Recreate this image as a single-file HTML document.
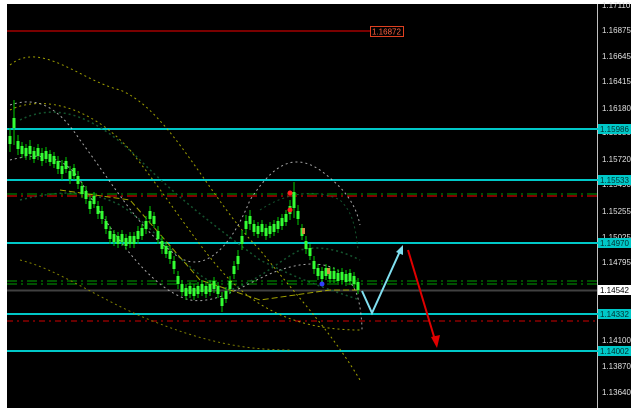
<!DOCTYPE html>
<html><head><meta charset="utf-8"><style>
html,body{margin:0;padding:0;background:#fff;width:643px;height:420px;overflow:hidden}
svg{position:absolute;left:0;top:0}
text{font-family:"Liberation Sans",sans-serif;font-size:8px}
</style></head><body>
<svg width="643" height="420" xmlns="http://www.w3.org/2000/svg">
<rect x="7" y="4" width="624" height="404" fill="#000"/>
<line x1="597.5" y1="4" x2="597.5" y2="408" fill="none" stroke="#c0c0c0" stroke-width="1"/>
<g fill="#e0e0e0">
<text x="602" y="8">1.17110</text>
<text x="602" y="33">1.16875</text>
<text x="602" y="59">1.16645</text>
<text x="602" y="84">1.16415</text>
<text x="602" y="111">1.16180</text>
<text x="602" y="135">1.15950</text>
<text x="602" y="162">1.15720</text>
<text x="602" y="187">1.15490</text>
<text x="602" y="214">1.15255</text>
<text x="602" y="240">1.15025</text>
<text x="602" y="265">1.14795</text>
<text x="602" y="343">1.14100</text>
<text x="602" y="369">1.13870</text>
<text x="602" y="395">1.13640</text>
</g>
<line x1="7" y1="31" x2="370" y2="31" stroke="#7a0000" stroke-width="2"/>
<rect x="370.5" y="26.5" width="33" height="10" fill="#000" stroke="#e04020"/>
<text x="372" y="34.5" fill="#ff6040">1.16872</text>
<line x1="7" y1="194" x2="597" y2="194" stroke="#00a000" stroke-width="1" stroke-dasharray="10,4,2,4"/>
<line x1="7" y1="196" x2="597" y2="196" stroke="#800000" stroke-width="2" stroke-dasharray="10,4,2,4"/>
<line x1="7" y1="281" x2="597" y2="281" stroke="#00a000" stroke-width="1" stroke-dasharray="10,4,2,4"/>
<line x1="7" y1="284" x2="597" y2="284" stroke="#00a000" stroke-width="1" stroke-dasharray="10,4,2,4"/>
<line x1="7" y1="290.5" x2="597" y2="290.5" stroke="#404040" stroke-width="2"/>
<line x1="7" y1="321" x2="597" y2="321" stroke="#d00000" stroke-width="1" stroke-dasharray="6,4,2,4"/>
<g stroke="#00c8c8" stroke-width="2">
<line x1="7" y1="129" x2="598" y2="129"/>
<line x1="7" y1="180" x2="598" y2="180"/>
<line x1="7" y1="243" x2="598" y2="243"/>
<line x1="7" y1="314" x2="598" y2="314"/>
<line x1="7" y1="351" x2="598" y2="351"/>
</g>
<g>
<rect x="598" y="124" width="33" height="10" fill="#00c8c8"/><text x="600" y="132" fill="#003030">1.15986</text>
<rect x="598" y="175" width="33" height="10" fill="#00c8c8"/><text x="600" y="183" fill="#003030">1.15533</text>
<rect x="598" y="238" width="33" height="10" fill="#00c8c8"/><text x="600" y="246" fill="#003030">1.14970</text>
<rect x="598" y="285" width="33" height="10" fill="#fff"/><text x="600" y="293" fill="#000">1.14542</text>
<rect x="598" y="309" width="33" height="10" fill="#00c8c8"/><text x="600" y="317" fill="#003030">1.14332</text>
<rect x="598" y="346" width="33" height="10" fill="#00c8c8"/><text x="600" y="354" fill="#003030">1.14002</text>
</g>
<g fill="none" stroke-width="1" stroke-dasharray="2,3" opacity="0.8">
<path d="M10 65 C40 40 80 80 120 90 C170 110 210 200 260 250 C300 300 330 330 360 380" stroke="#c8c800"/>
<path d="M10 110 C40 95 90 105 130 150 C170 200 200 250 230 280 C260 310 300 330 360 330" stroke="#c8c800"/>
<path d="M20 260 C60 270 100 300 150 320 C200 340 240 350 290 350" stroke="#a0a000"/>
<path d="M10 105 C40 95 60 110 80 140 C110 180 140 230 170 250 C200 280 230 250 250 200 C270 170 290 150 320 170 C340 185 355 200 360 225" stroke="#d0d0d0"/>
<path d="M10 160 C30 155 60 150 80 180 C110 230 150 290 190 300 C220 305 250 280 280 270 C310 260 340 260 355 290 C360 300 362 320 362 330" stroke="#d0d0d0"/>
<path d="M20 120 C60 100 100 120 140 160 C180 200 220 230 260 260 C300 280 330 290 360 300" stroke="#1a6a3a" stroke-width="1.5"/>
<path d="M20 200 C60 190 90 190 120 205 C160 230 190 280 230 290 C260 280 280 260 300 250 C320 245 340 250 360 260" stroke="#1a6a3a" stroke-width="1.5"/>
<path d="M260 210 C290 190 320 190 340 200 C350 210 355 220 358 250" stroke="#1a6a3a"/>
<path d="M60 190 L130 200 L200 280 L260 300 L330 290 L360 290" stroke="#c8c800" stroke-dasharray="6,3"/>
</g>
<path stroke="#00cc00" stroke-width="1" fill="none" d="M10 128V152M14 100V145M18 135V155M22 142V158M26 144V160M30 140V160M34 147V163M38 144V160M42 148V166M46 147V163M50 150V166M54 152V168M58 156V174M62 160V180M66 157V173M70 166V184M74 164V180M78 171V189M82 182V198M86 186V204M90 196V214M94 192V208M98 201V219M102 206V224M106 216V234M110 226V244M114 230V246M118 232V248M122 230V246M126 234V250M130 232V248M134 232V248M138 226V244M142 224V240M146 216V234M150 206V224M154 212V228M158 226V244M162 236V254M166 242V258M170 246V264M174 256V274M178 271V289M182 280V296M186 284V300M190 282V298M194 284V300M198 282V298M202 280V296M206 282V298M210 280V296M214 277V293M218 282V298M222 292V312M226 287V303M230 276V294M234 261V279M238 250V270M242 230V250M246 215V235M250 210V230M254 220V236M258 222V238M262 220V236M266 224V240M270 222V238M274 220V236M278 217V233M282 214V230M286 210V226M290 200V220M294 182V218M298 205V225M302 224V240M306 236V254M310 244V260M314 256V274M318 264V280M322 267V283M326 264V280M330 267V283M334 267V283M338 269V285M342 268V284M346 270V286M350 269V285M354 272V288M358 278V294"/>
<path stroke="#33ff33" stroke-width="3" fill="none" d="M10 136V144M14 118V128M18 141V149M22 146V154M26 148V156M30 146V154M34 151V159M38 148V156M42 153V161M46 151V159M50 154V162M54 156V164M58 161V169M62 166V174M66 161V169M70 171V179M74 168V176M78 176V184M82 186V194M86 191V199M90 201V209M94 196V204M98 206V214M102 211V219M106 221V229M110 231V239M114 234V242M118 236V244M122 234V242M126 238V246M130 236V244M134 236V244M138 231V239M142 228V236M146 221V229M150 211V219M154 216V224M158 231V239M162 241V249M166 246V254M170 251V259M174 261V269M178 276V284M182 284V292M186 288V296M190 286V294M194 288V296M198 286V294M202 284V292M206 286V294M210 284V292M214 281V289M218 286V294M222 298V306M226 291V299M230 281V289M234 266V274M238 256V264M242 236V244M246 221V229M250 216V224M254 224V232M258 226V234M262 224V232M266 228V236M270 226V234M274 224V232M278 221V229M282 218V226M286 214V222M290 206V214M294 192V208M298 211V219M302 228V236M306 241V249M310 248V256M314 261V269M318 268V276M322 271V279M326 268V276M330 271V279M334 271V279M338 273V281M342 272V280M346 274V282M350 273V281M354 276V284M358 282V290"/>
<circle cx="290" cy="193" r="2.5" fill="#ff2020"/>
<circle cx="290" cy="210" r="2.5" fill="#ff2020"/>
<rect x="302" y="228" width="3" height="6" fill="#d09040"/>
<rect x="327" y="268" width="3" height="6" fill="#d09040"/>
<circle cx="322" cy="284" r="2.5" fill="#3040ff"/>
<path d="M362 291 L372 313 L401 249" stroke="#80e0f0" stroke-width="2" fill="none"/>
<path d="M403 245 L396 252 L403 255 Z" fill="#80e0f0"/>
<path d="M363 295 L371 312 L367 300 Z" fill="#80e0f0"/>
<line x1="408" y1="250" x2="435" y2="340" stroke="#e00000" stroke-width="2"/>
<path d="M437 348 L431 337 L440 335 Z" fill="#e00000"/>
</svg>
</body></html>
